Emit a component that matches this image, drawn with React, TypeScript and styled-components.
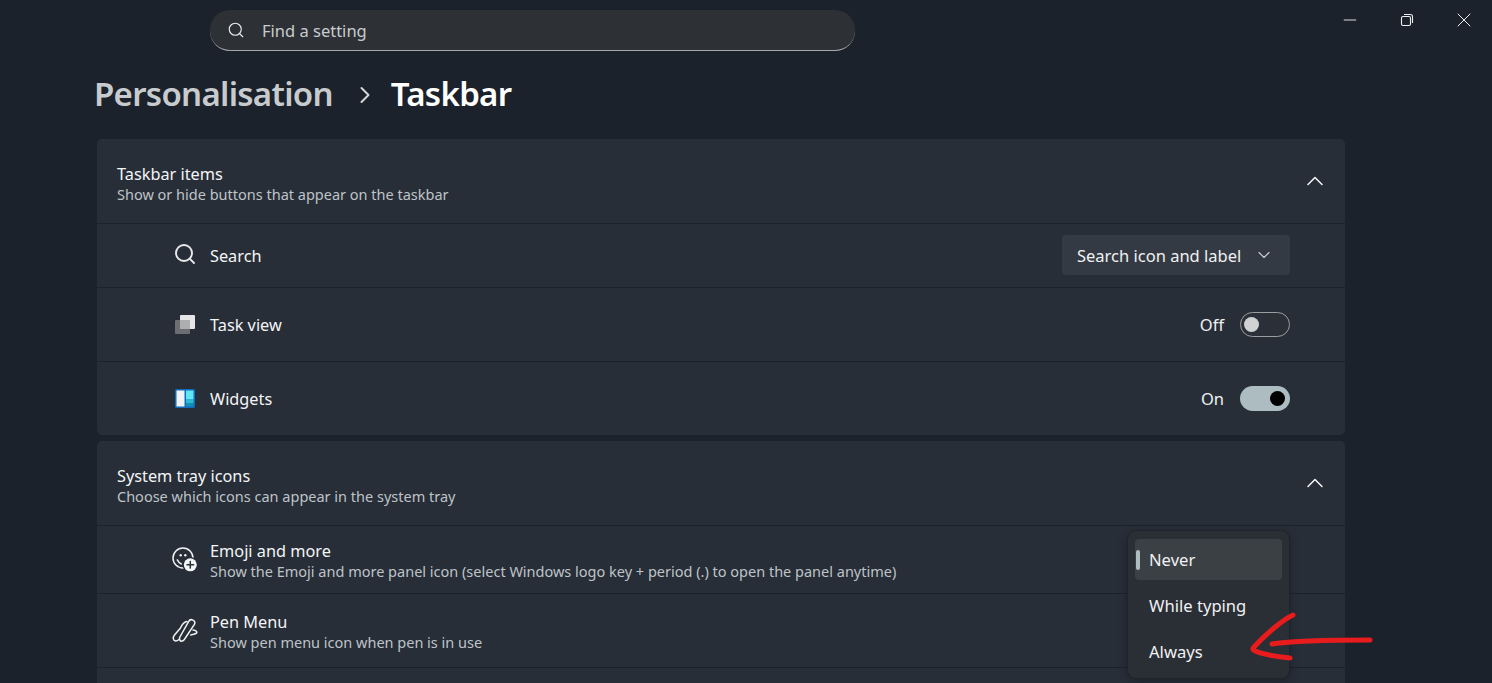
import React from 'react';
import styled, { createGlobalStyle } from 'styled-components';
import { ChevronDown, ChevronRight, ChevronUp, Minus, Search, X } from 'lucide-react';

const GlobalStyle = createGlobalStyle`
  html, body {
    margin: 0;
    height: 100%;
    overflow: hidden;
    background: #1b222b;
  }
  * { box-sizing: border-box; }
`;

const Page = styled.div`
  position: relative;
  height: 683px;
  overflow: hidden;
  background: #1b222b;
  color: #fff;
  font-family: "Noto Sans", "Open Sans", sans-serif;
`;

const TopBar = styled.div`
  display: flex;
  justify-content: space-between;
  align-items: flex-start;
  padding: 10px 0 0 210px;
  height: 51px;
`;

const SearchBox = styled.div`
  display: flex;
  align-items: center;
  width: 645px;
  height: 41px;
  padding-left: 17px;
  gap: 17px;
  background: #2d3135;
  border-radius: 20px;
  border-bottom: 1px solid #a4a7a9;
  color: #c9cbcd;
  font-size: 16.5px;
`;

const WindowControls = styled.div`
  display: flex;
  margin-top: -10px;
`;

const WindowButton = styled.div`
  display: flex;
  align-items: center;
  justify-content: center;
  width: 57px;
  height: 39px;
  color: #eeeff0;
`;

const Breadcrumb = styled.h1`
  display: flex;
  align-items: center;
  margin: 0;
  padding: 0 0 4px 94px;
  height: 88px;
  font-size: 33px;
  font-weight: 600;
  letter-spacing: -0.7px;
  color: #fff;
`;

const Parent = styled.span`
  color: #c8cbce;
`;

const Separator = styled.span`
  display: flex;
  width: 58px;
  padding: 4px 0 0 7px;
  justify-content: center;
  color: #d5d7d9;
`;

const Content = styled.div`
  display: flex;
  flex-direction: column;
  gap: 6px;
  margin: 0 147px 0 97px;
`;

const Card = styled.section`
  background: #272e38;
  border-radius: 5px;
`;

const CardHeader = styled.div`
  display: flex;
  align-items: center;
  justify-content: space-between;
  height: 85px;
  padding: 0 16px 0 20px;
  border-bottom: 1px solid #1b222b;
`;

const HeaderText = styled.div`
  padding-top: 6px;
`;

const Title = styled.div`
  font-size: 16.3px;
  line-height: 21px;
  color: #f4f5f6;
`;

const Caption = styled.div`
  margin: -1px 0 1px;
  font-size: 14.5px;
  line-height: 20px;
  color: #bfc3c7;
`;

const Row = styled.div<{ $height: number; $last?: boolean }>`
  position: relative;
  display: flex;
  align-items: center;
  height: ${(p) => p.$height}px;
  padding: 0 55px 0 75px;
  border-bottom: ${(p) => (p.$last ? 'none' : '1px solid #1b222b')};
`;

const RowIcon = styled.div`
  display: flex;
  align-items: center;
  justify-content: center;
  width: 26px;
  height: 26px;
  margin-right: 12px;
  flex: none;
`;

const RowText = styled.div`
  flex: 1;
  padding-top: 2px;
`;

const RowTextWithCaption = styled(RowText)`
  padding-top: 3px;
`;

const Select = styled.div`
  display: flex;
  align-items: center;
  gap: 13px;
  width: 228px;
  height: 40px;
  margin-bottom: 2px;
  padding: 1px 0 0 15px;
  background: #343a43;
  border-radius: 4px;
  font-size: 16.5px;
  color: #f0f1f2;
`;

const ToggleWrap = styled.div`
  display: flex;
  align-items: center;
  gap: 16px;
  font-size: 16.5px;
  color: #f0f1f2;
`;

const Toggle = styled.div<{ $on?: boolean }>`
  display: flex;
  align-items: center;
  justify-content: ${(p) => (p.$on ? 'flex-end' : 'flex-start')};
  width: 50px;
  height: 25px;
  padding: ${(p) => (p.$on ? '0 5px' : '0 3px')};
  border-radius: 13px;
  background: ${(p) => (p.$on ? '#adbcc0' : '#2b3038')};
  border: ${(p) => (p.$on ? 'none' : '1px solid #9a9da1')};
`;

const Knob = styled.div<{ $on?: boolean }>`
  width: 15px;
  height: 15px;
  border-radius: 50%;
  background: ${(p) => (p.$on ? '#000' : '#d0d1d3')};
`;

const Menu = styled.div`
  position: absolute;
  z-index: 2;
  top: 4px;
  right: 55px;
  width: 163px;
  height: 149px;
  padding: 8px 7px;
  background: #2a2e35;
  border: 1px solid #1f242b;
  border-radius: 9px;
  box-shadow: 0 3px 10px rgba(0, 0, 0, 0.25);
`;

const MenuItem = styled.div<{ $selected?: boolean }>`
  position: relative;
  display: flex;
  align-items: center;
  height: 41px;
  margin-bottom: 5px;
  padding-left: 14px;
  border-radius: 4px;
  background: ${(p) => (p.$selected ? '#3b4045' : 'transparent')};
  font-size: 16.6px;
  color: #f0f1f2;

  &::before {
    content: '';
    display: ${(p) => (p.$selected ? 'block' : 'none')};
    position: absolute;
    left: 1px;
    top: 11px;
    width: 4px;
    height: 20px;
    border-radius: 2px;
    background: #adbcc0;
  }
`;

const Annotation = styled.svg`
  position: absolute;
  z-index: 3;
  left: 1240px;
  top: 600px;
`;

const RestoreIcon = () => (
  <svg width="14" height="14" viewBox="0 0 14 14" fill="none" stroke="currentColor" strokeWidth="1.1">
    <rect x="1.5" y="3.5" width="9" height="9" rx="1.5" />
    <path d="M4 1.5h6.5a2 2 0 0 1 2 2V10" />
  </svg>
);

const TaskViewIcon = () => (
  <svg width="20" height="20" viewBox="0 0 20 20">
    <rect x="5" y="0" width="15" height="14" rx="1" fill="#e6e6e8" />
    <rect x="0" y="5" width="15" height="14" rx="1" fill="#6c6e72" />
    <rect x="5" y="5" width="10" height="9" fill="#adaeb0" />
  </svg>
);

const WidgetsIcon = () => (
  <svg width="20" height="20" viewBox="0 0 20 20">
    <rect x="0" y="0" width="20" height="19" rx="1.5" fill="#0f6cbd" />
    <rect x="1.5" y="1.5" width="8" height="16" fill="#f1f3f5" />
    <rect x="11" y="1.5" width="7.5" height="9" fill="#5fe6f3" />
    <rect x="11" y="10.5" width="7.5" height="3.5" fill="#2fb9cf" />
    <rect x="11" y="14" width="7.5" height="3.5" fill="#128fb4" />
  </svg>
);

const EmojiIcon = () => (
  <svg width="26" height="26" viewBox="0 0 26 26" fill="none" stroke="#f1f2f3" strokeWidth="1.5" strokeLinecap="round">
    <circle cx="11" cy="11" r="10" />
    <circle cx="8.7" cy="8.2" r="1.2" fill="#f1f2f3" stroke="none" />
    <circle cx="13.3" cy="8.2" r="1.2" fill="#f1f2f3" stroke="none" />
    <path d="M5.3 12.8c1 2 2.5 3.5 4 4.2" />
    <circle cx="18.3" cy="17.8" r="7.8" fill="#272e38" stroke="none" />
    <circle cx="18.3" cy="17.8" r="6.5" fill="#f4f5f6" stroke="none" />
    <path d="M18.3 14.5v6.6M15 17.8h6.6" stroke="#272e38" strokeWidth="1.5" />
  </svg>
);

const PenIcon = () => (
  <svg width="26" height="26" viewBox="0 0 26 26" fill="none" stroke="#f1f2f3" strokeWidth="1.5" strokeLinecap="round" strokeLinejoin="round">
    <path d="M16.6 3.6a3.2 3.2 0 0 1 5.8 2.8L13 20.5c-.8 1.5-2.5 2.8-4 2.8-1-.5-1.7-2-1.4-3.8z" />
    <path d="M15 3.5C11 4 10 7 8.5 10L2.5 17C.5 19.5 1 22.5 3.5 23 4.5 23 6 22.5 7 21.500" />
    <path d="M21 12c2 .3 4 1 3.8 2.5-.3 1.5-3 1.700-6 2.500" />
  </svg>
);

const App = () => (
  <Page>
    <GlobalStyle />
    <TopBar>
      <SearchBox>
        <Search size={18} strokeWidth={1.5} color="#eceded" />
        Find a setting
      </SearchBox>
      <WindowControls>
        <WindowButton><Minus size={20} strokeWidth={1.1} /></WindowButton>
        <WindowButton><RestoreIcon /></WindowButton>
        <WindowButton><X size={24} strokeWidth={1} /></WindowButton>
      </WindowControls>
    </TopBar>

    <Breadcrumb>
      <Parent>Personalisation</Parent>
      <Separator><ChevronRight size={28} strokeWidth={1.7} /></Separator>
      Taskbar
    </Breadcrumb>

    <Content>
      <Card>
        <CardHeader>
          <HeaderText>
            <Title>Taskbar items</Title>
            <Caption>Show or hide buttons that appear on the taskbar</Caption>
          </HeaderText>
          <ChevronUp size={28} strokeWidth={1.3} color="#f4f5f6" />
        </CardHeader>
        <Row $height={64}>
          <RowIcon><Search size={24} strokeWidth={1.9} color="#e8e9ea" style={{ transform: 'translateY(-2px)' }} /></RowIcon>
          <RowText><Title>Search</Title></RowText>
          <Select>
            Search icon and label
            <ChevronDown size={20} strokeWidth={1.3} color="#d0d2d4" />
          </Select>
        </Row>
        <Row $height={74}>
          <RowIcon><TaskViewIcon /></RowIcon>
          <RowText><Title>Task view</Title></RowText>
          <ToggleWrap>Off<Toggle><Knob /></Toggle></ToggleWrap>
        </Row>
        <Row $height={73} $last>
          <RowIcon><WidgetsIcon /></RowIcon>
          <RowText><Title>Widgets</Title></RowText>
          <ToggleWrap>On<Toggle $on><Knob $on /></Toggle></ToggleWrap>
        </Row>
      </Card>

      <Card>
        <CardHeader>
          <HeaderText>
            <Title>System tray icons</Title>
            <Caption>Choose which icons can appear in the system tray</Caption>
          </HeaderText>
          <ChevronUp size={28} strokeWidth={1.3} color="#f4f5f6" />
        </CardHeader>
        <Row $height={68}>
          <RowIcon><EmojiIcon /></RowIcon>
          <RowTextWithCaption>
            <Title>Emoji and more</Title>
            <Caption>Show the Emoji and more panel icon (select Windows logo key + period (.) to open the panel anytime)</Caption>
          </RowTextWithCaption>
          <Menu>
            <MenuItem $selected>Never</MenuItem>
            <MenuItem>While typing</MenuItem>
            <MenuItem>Always</MenuItem>
          </Menu>
        </Row>
        <Row $height={74}>
          <RowIcon><PenIcon /></RowIcon>
          <RowTextWithCaption>
            <Title>Pen Menu</Title>
            <Caption>Show pen menu icon when pen is in use</Caption>
          </RowTextWithCaption>
          <ToggleWrap>Off<Toggle><Knob /></Toggle></ToggleWrap>
        </Row>
        <Row $height={40} $last />
      </Card>
    </Content>

    <Annotation width="135" height="65" viewBox="0 0 135 65" fill="none" stroke="#e81c1c" strokeWidth="5" strokeLinecap="round" strokeLinejoin="round">
      <path d="M53 15C42 20 24 36 14 47c-2 2-1 3 1 4 10 4 24 6 35 7" />
      <path d="M32 44c20-3 55-4 98-4" />
    </Annotation>
  </Page>
);

export default App;
